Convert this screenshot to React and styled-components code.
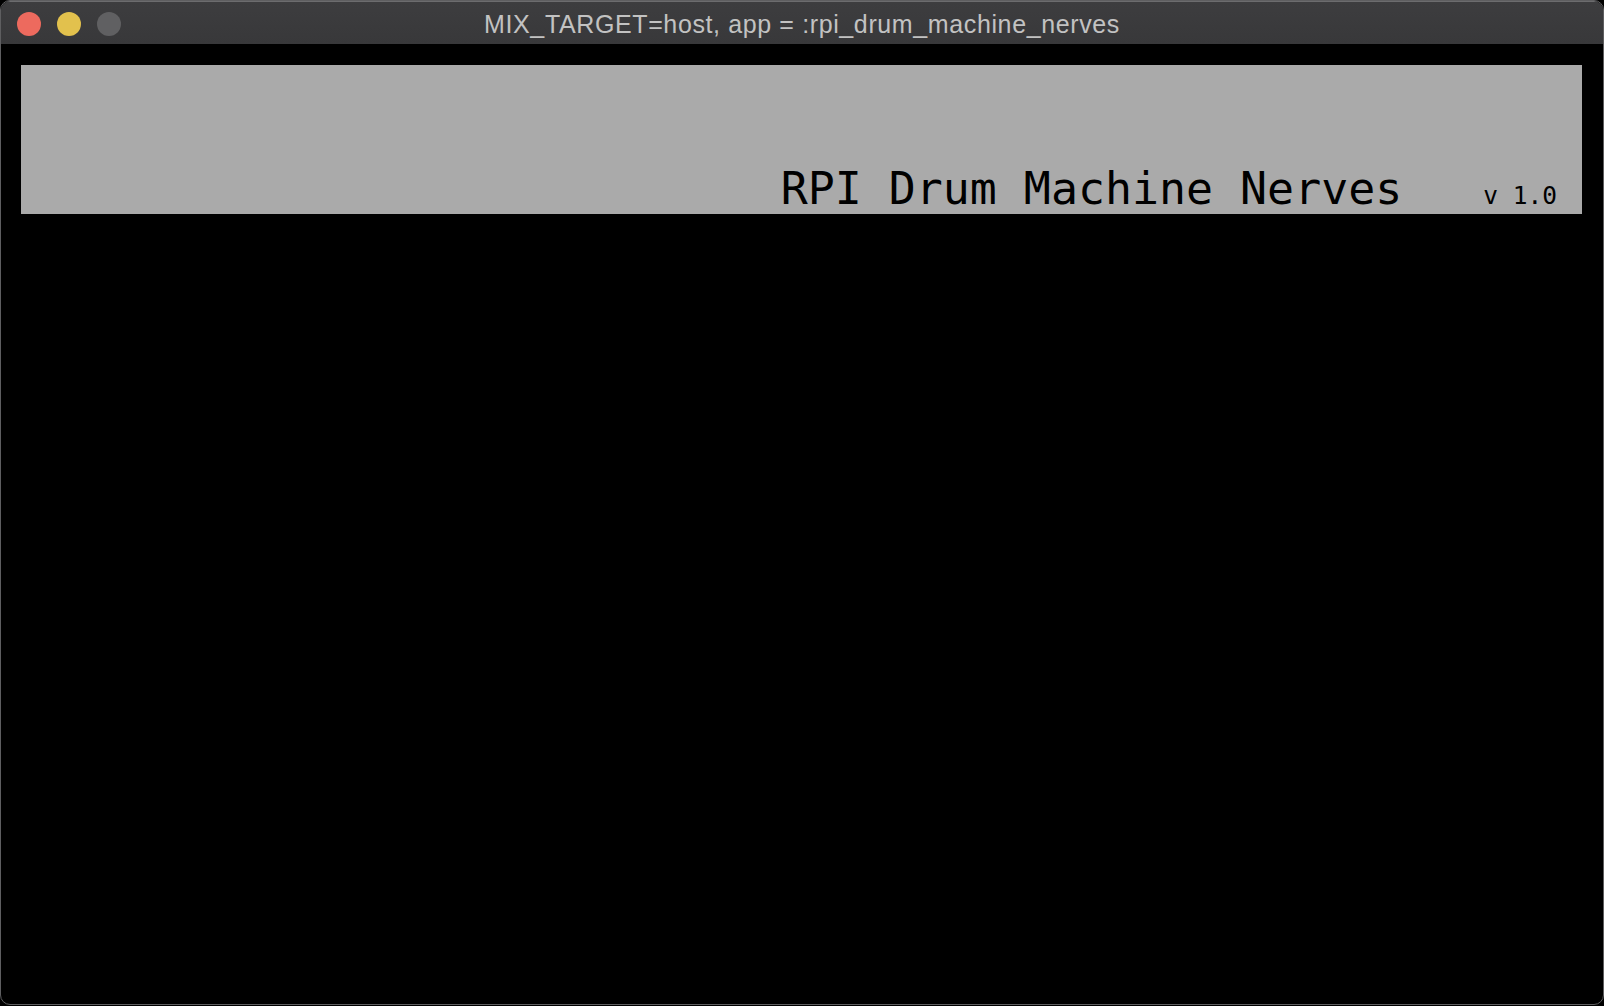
import React from "react";
import styled, { createGlobalStyle } from "styled-components";

const Global = createGlobalStyle`
  html, body {
    margin: 0;
    padding: 0;
    background: #000;
    width: 1604px;
    height: 1006px;
    overflow: hidden;
  }
  #root { width: 1604px; height: 1006px; }
`;

const Window = styled.div`
  box-sizing: border-box;
  width: 1604px;
  height: 1005px;
  border: 1px solid #5e5e60;
  border-radius: 10px;
  overflow: hidden;
  background: #000;
  display: flex;
  flex-direction: column;
`;

const TitleBar = styled.div`
  position: relative;
  height: 42px;
  flex: none;
  background: linear-gradient(#3d3d3f, #38383a);
  border-top: 1px solid #6c6c6e;
  display: flex;
  align-items: center;
  justify-content: center;
`;

const Lights = styled.div`
  position: absolute;
  left: 16px;
  top: 10px;
  display: flex;
  gap: 16px;
`;

const Light = styled.span`
  width: 24px;
  height: 24px;
  border-radius: 50%;
  background: ${(p) => p.$color};
`;

const Title = styled.div`
  font-family: "Liberation Sans", Arial, sans-serif;
  font-size: 25px;
  color: #c2c2c2;
  letter-spacing: 0.62px;
  margin-top: 2px;
  white-space: nowrap;
`;

const Content = styled.div`
  flex: 1;
  padding: 21px 21px 0 20px;
`;

const Banner = styled.div`
  height: 149px;
  background: #aaaaaa;
  display: flex;
  justify-content: flex-end;
  align-items: flex-end;
  padding-right: 25px;
  padding-bottom: 2px;
  box-sizing: border-box;
`;

const HeadRow = styled.div`
  display: flex;
  align-items: baseline;
  gap: 81px;
`;

const AppName = styled.div`
  font-family: "DejaVu Sans Mono", "Liberation Mono", monospace;
  font-size: 44.9px;
  line-height: 1;
  color: #000;
  white-space: nowrap;
`;

const Version = styled.div`
  font-family: "DejaVu Sans Mono", "Liberation Mono", monospace;
  font-size: 24.5px;
  line-height: 1;
  color: #000;
  white-space: nowrap;
`;

export default function App() {
  return (
    <>
      <Global />
      <Window>
        <TitleBar>
          <Lights>
            <Light $color="#ed6a5e" />
            <Light $color="#e2c14d" />
            <Light $color="#606062" />
          </Lights>
          <Title>MIX_TARGET=host, app = :rpi_drum_machine_nerves</Title>
        </TitleBar>
        <Content>
          <Banner>
            <HeadRow>
              <AppName>RPI Drum Machine Nerves</AppName>
              <Version>v 1.0</Version>
            </HeadRow>
          </Banner>
        </Content>
      </Window>
    </>
  );
}
